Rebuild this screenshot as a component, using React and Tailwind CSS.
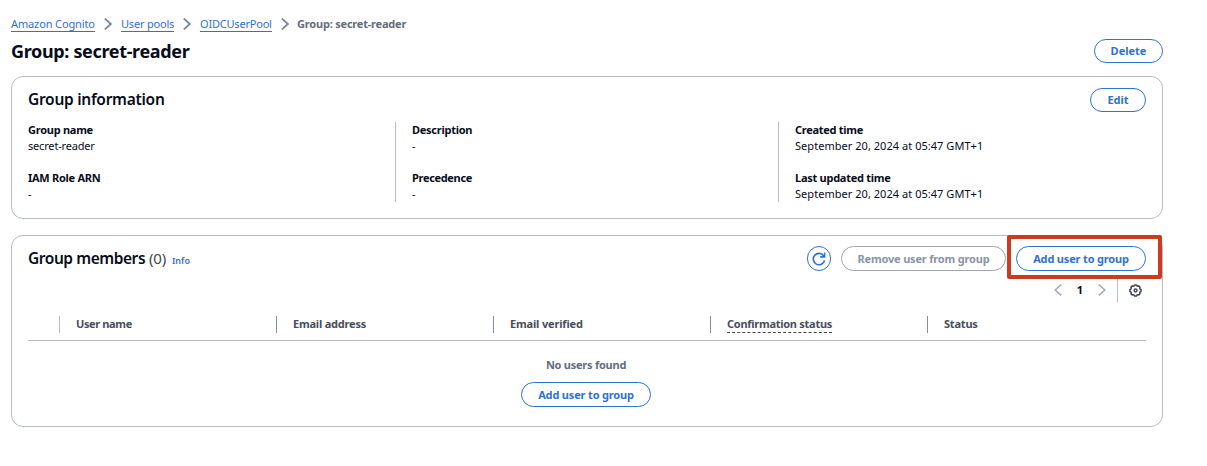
function Chevron({ left = false, className = "" }) {
  return (
    <svg viewBox="0 0 8 12" fill="none" stroke="currentColor" className={`h-3 w-2 shrink-0 ${className}`}>
      <path d={left ? "M7.200 .6 1.200 6 7.200 11.400" : "M.8 .6 6.800 6 .8 11.400"} />
    </svg>
  );
}

function RefreshIcon() {
  return (
    <svg viewBox="0 0 14 14" fill="none" stroke="currentColor" strokeWidth="1.6" className="size-3.5">
      <path d="M12.6 8.3A5.7 5.7 0 1 1 11.9 4.1" />
      <path d="M12.6 .6V4.9H8.3" />
    </svg>
  );
}

function GearIcon() {
  return (
    <svg viewBox="0 0 14 14" fill="none" stroke="currentColor" strokeWidth="1.6" strokeLinejoin="round" className="size-[13px]">
      <path d="M5.7 1.9 6 1h2l.3.9 1.3.5.9-.4 1.4 1.4-.4.9.6 1.4.9.3v2l-.9.3-.6 1.3.4.9-1.4 1.4-.9-.4-1.3.6L8 13H6l-.3-.9-1.4-.6-.9.4L2 10.500l.4-.9-.5-1.300L1 8V6l.9-.3.5-1.400L2 3.400 3.400 2l.9.4z" />
      <circle cx="7" cy="7" r="1.5" />
    </svg>
  );
}

function Crumb({ children, className }) {
  return (
    <>
      <a href="#" className={`h-4 shrink-0 border-b border-[#2f72d6] leading-4 text-[#2f72d6] ${className}`}>{children}</a>
      <Chevron className="mx-[9px] stroke-[1.8] text-[#7d8795]" />
    </>
  );
}

function Button({ children, className }) {
  return (
    <button className={`flex shrink-0 items-center justify-center rounded-full border-[1.3px] text-[11px] font-bold ${className}`}>
      {children}
    </button>
  );
}

const blue = "border-[#2f72d6] text-[#2f72d6]";

function Field({ label, value, labelClass, valueClass = "" }) {
  return (
    <div>
      <dt className={`font-bold ${labelClass}`}>{label}</dt>
      <dd className={valueClass}>{value}</dd>
    </div>
  );
}

function Column({ children, className }) {
  return (
    <div className={`flex h-[17px] w-[217px] shrink-0 items-start border-l pl-4 ${className}`}>{children}</div>
  );
}

export default function App() {
  return (
    <div className="h-[466px] w-[1207px] overflow-hidden bg-white pl-[11px] pt-4 font-['Noto_Sans','Open_Sans',sans-serif] text-[11px] leading-4 text-[#070c19]">
      <main className="w-[1152px]">
        <nav className="flex h-4 items-center whitespace-nowrap">
          <Crumb className="w-[84px] tracking-[-0.13px]">Amazon Cognito</Crumb>
          <Crumb className="w-[53px] tracking-[-0.2px]">User pools</Crumb>
          <Crumb className="w-[72px] tracking-[-0.2px]">OIDCUserPool</Crumb>
          <span className="-ml-px font-bold tracking-[-0.2px] text-[#656d7b]">Group: secret-reader</span>
        </nav>

        <header className="mt-[7px] flex h-6 items-center justify-between">
          <h1 className="text-[18px] font-bold tracking-[-0.34px]">Group: secret-reader</h1>
          <Button className={`h-6 w-[69px] ${blue}`}>Delete</Button>
        </header>

        <section className="mt-[13px] h-[143px] rounded-xl border border-[#b6bcc9] px-4 pt-[11px]">
          <div className="flex h-6 items-center justify-between">
            <h2 className="pb-[2px] text-[15.5px] font-semibold tracking-[-0.28px]">Group information</h2>
            <Button className={`h-6 w-14 ${blue}`}>Edit</Button>
          </div>
          <dl className="mt-[10px] flex">
            <div className="flex w-[367px] flex-col gap-4">
              <Field label="Group name" value="secret-reader" labelClass="tracking-[-0.26px]" valueClass="tracking-[-0.18px]" />
              <Field label="IAM Role ARN" value="-" labelClass="tracking-[-0.27px]" />
            </div>
            <div className="flex w-[383px] flex-col gap-4 border-l border-[#b6bcc9] pl-4">
              <Field label="Description" value="-" labelClass="tracking-[-0.26px]" />
              <Field label="Precedence" value="-" labelClass="tracking-[-0.32px]" />
            </div>
            <div className="flex flex-col gap-4 border-l border-[#b6bcc9] pl-4">
              <Field label="Created time" value="September 20, 2024 at 05:47 GMT+1" labelClass="tracking-[-0.28px]" valueClass="tracking-[0.04px]" />
              <Field label="Last updated time" value="September 20, 2024 at 05:47 GMT+1" labelClass="tracking-[-0.26px]" valueClass="tracking-[0.04px]" />
            </div>
          </dl>
        </section>

        <section className="relative mt-4 h-[192px] rounded-xl border border-[#b6bcc9] px-4 pt-[10px]">
          <div className="flex h-[25px] items-center justify-between">
            <div className="flex items-baseline pt-[2px]">
              <h2 className="w-[121px] whitespace-nowrap text-[15.5px] font-semibold tracking-[-0.44px]">Group members</h2>
              <span className="w-[23px] text-[15px] tracking-[-0.2px] text-[#424650]">(0)</span>
              <a href="#" className="text-[9px] font-semibold text-[#2f72d6]">Info</a>
            </div>
            <div className="flex items-center gap-[10px]">
              <Button className={`h-[25px] w-6 ${blue}`}><RefreshIcon /></Button>
              <Button className="h-[25px] w-[165px] border-[#9ea6b3] tracking-[-0.18px] text-[#8b94a3]">Remove user from group</Button>
              <Button className={`h-[25px] w-[130px] tracking-[-0.17px] ${blue}`}>Add user to group</Button>
            </div>
          </div>

          <div className="mt-[7px] flex h-6 items-center justify-end pr-1">
            <Chevron left className="stroke-[1.6] text-[#a3abb9]" />
            <span className="w-[36px] text-center font-bold">1</span>
            <Chevron className="stroke-[1.6] text-[#a3abb9]" />
            <span className="ml-[11px] mr-[11px] h-6 w-px bg-[#b6bcc9]" />
            <span className="text-[#424650]"><GearIcon /></span>
          </div>

          <div className="mt-[14px] flex h-[25px] overflow-hidden whitespace-nowrap border-b border-[#b6bcc9] pl-[31px] font-bold text-[#474e5b]">
            <Column className="border-[#b6bcc9] tracking-[-0.37px]">User name</Column>
            <Column className="border-[#858d9b] tracking-[-0.2px]">Email address</Column>
            <Column className="border-[#858d9b] tracking-[-0.16px]">Email verified</Column>
            <Column className="border-[#858d9b] tracking-[-0.27px]">
              <span className="h-[17px] border-b border-dashed border-[#424650]">Confirmation status</span>
            </Column>
            <Column className="border-[#858d9b] tracking-[-0.2px]">Status</Column>
          </div>

          <div className="flex flex-col items-center pt-4 pr-[2px]">
            <p className="font-bold tracking-[-0.24px] text-[#656d7b]">No users found</p>
            <Button className={`mt-[9px] h-[25px] w-[130px] tracking-[-0.17px] ${blue}`}>Add user to group</Button>
          </div>

          <div className="pointer-events-none absolute -top-px right-0 h-11 w-[155px] rounded-[2px] border-4 border-[#cc3a20]" />
        </section>
      </main>
    </div>
  );
}
